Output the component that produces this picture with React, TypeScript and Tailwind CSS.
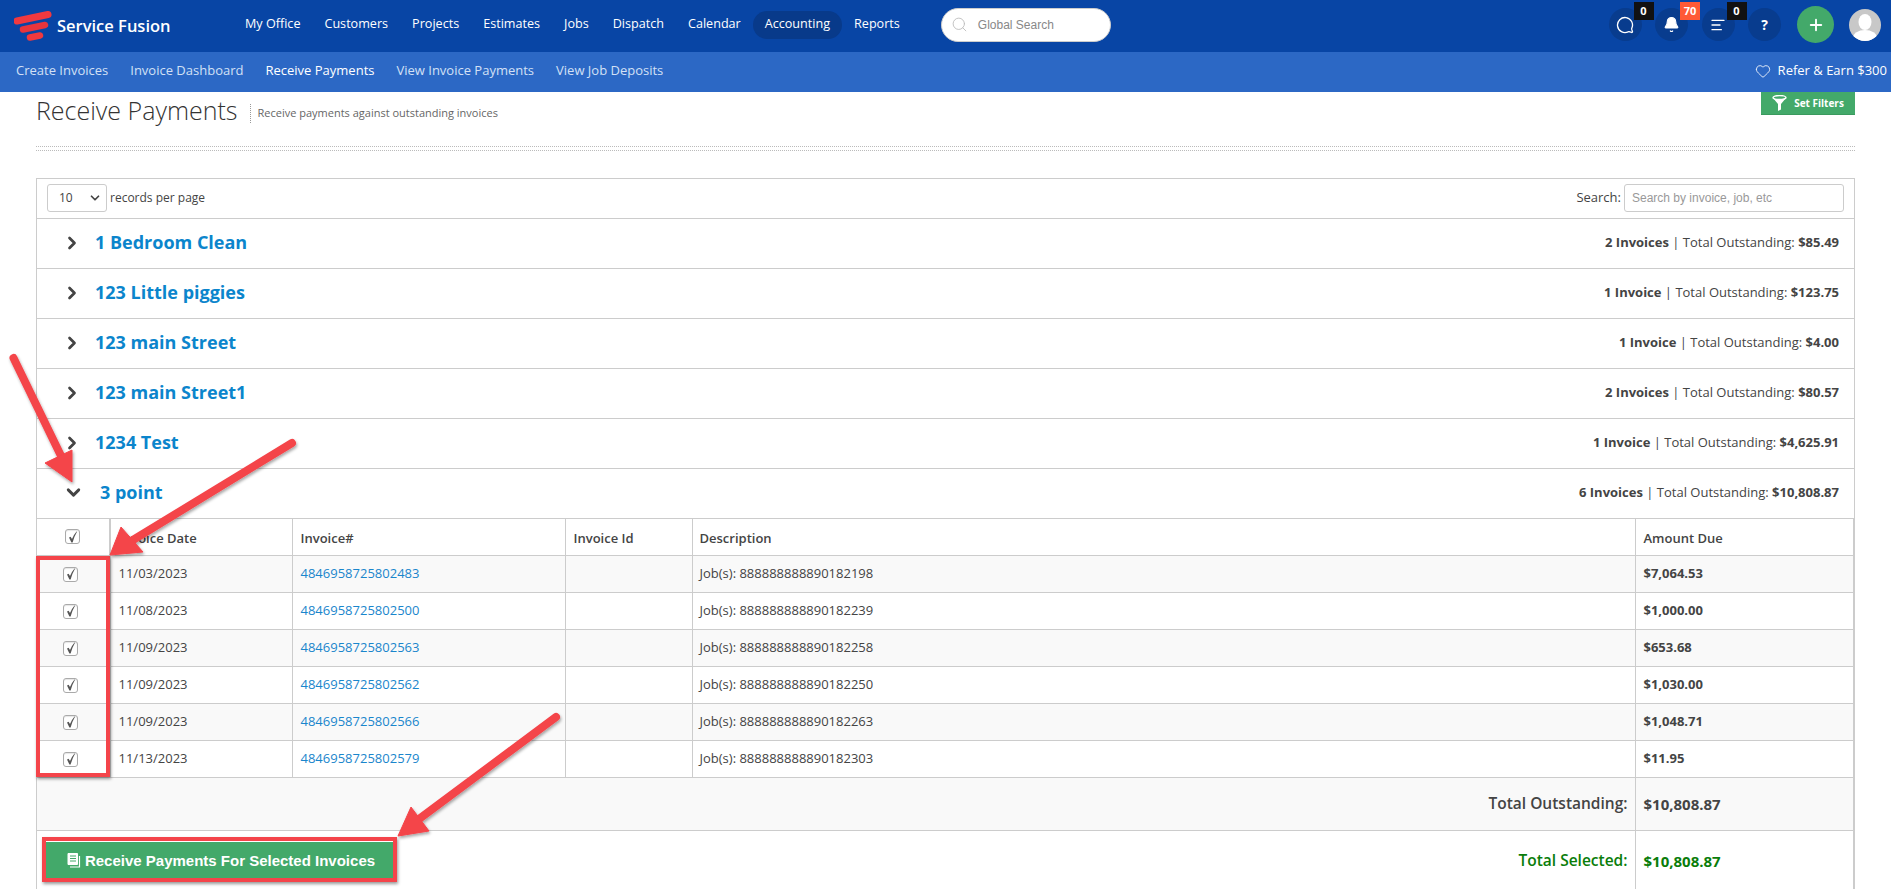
import { AlignLeft, Bell, ChevronDown, ChevronRight, Heart, MessageCircle, Plus, Search } from "lucide-react";

const mainNav = ["My Office", "Customers", "Projects", "Estimates", "Jobs", "Dispatch", "Calendar", "Accounting", "Reports"];
const subNav = ["Create Invoices", "Invoice Dashboard", "Receive Payments", "View Invoice Payments", "View Job Deposits"];

const customers = [
  { name: "1 Bedroom Clean", count: "2 Invoices", total: "$85.49" },
  { name: "123 Little piggies", count: "1 Invoice", total: "$123.75" },
  { name: "123 main Street", count: "1 Invoice", total: "$4.00" },
  { name: "123 main Street1", count: "2 Invoices", total: "$80.57" },
  { name: "1234 Test", count: "1 Invoice", total: "$4,625.91" },
];

const invoices = [
  { date: "11/03/2023", id: "4846958725802483", job: "Job(s): 888888888890182198", due: "$7,064.53" },
  { date: "11/08/2023", id: "4846958725802500", job: "Job(s): 888888888890182239", due: "$1,000.00" },
  { date: "11/09/2023", id: "4846958725802563", job: "Job(s): 888888888890182258", due: "$653.68" },
  { date: "11/09/2023", id: "4846958725802562", job: "Job(s): 888888888890182250", due: "$1,030.00" },
  { date: "11/09/2023", id: "4846958725802566", job: "Job(s): 888888888890182263", due: "$1,048.71" },
  { date: "11/13/2023", id: "4846958725802579", job: "Job(s): 888888888890182303", due: "$11.95" },
];

const Checkbox = () => (
  <span className="inline-flex h-[15px] w-[15px] items-center justify-center rounded-[3px] border border-[#aaa] bg-white shadow-[inset_0_1px_1px_rgba(0,0,0,0.1)]">
    <svg width="11" height="12" viewBox="0 0 11 12">
      <path d="M2 6.5 L3.6 5.8 L5 8 Q6.5 4 9.5 0.5 L10 0.8 Q7.5 5 5.6 11.5 L4.4 11.5 Z" fill="#555" />
    </svg>
  </span>
);

const IconCircle = ({ children, badge, hot }: { children: React.ReactNode; badge?: string; hot?: boolean }) => (
  <div className="relative flex h-[33px] w-[33px] items-center justify-center rounded-full bg-[#083c8e] text-white">
    {children}
    {badge && (
      <span
        className={`absolute left-[25px] top-[-6px] flex h-[18px] w-[20px] items-center justify-center text-[11px] font-bold ${
          hot ? "bg-[#ff5a36]" : "bg-[#111]"
        }`}
      >
        {badge}
      </span>
    )}
  </div>
);

export default function App() {
  return (
    <div className="relative h-[889px] w-[1891px] overflow-hidden bg-white font-['Open_Sans',sans-serif] text-[13px] text-[#444]">
      {/* Top bar */}
      <header className="flex h-[52px] items-center bg-[#0845a5] pb-[3px] text-white">
        <div className="mt-[3px] flex w-[233px] items-center pl-[14px]">
          <svg width="38" height="32" viewBox="0 0 38 32" className="shrink-0">
            <g stroke="#f0393f" strokeLinecap="round" fill="none">
              <path d="M3 11 L34 4.5" strokeWidth="7" />
              <path d="M9 19.5 L31 15" strokeWidth="6.5" stroke="#e8353c" />
              <path d="M16 27.5 L26 25.5" strokeWidth="6.5" />
            </g>
          </svg>
          <span className="ml-[5px] text-[16.5px] font-semibold">Service Fusion</span>
        </div>
        <nav className="flex items-center text-[12.6px]">
          {mainNav.map((item) => (
            <a
              key={item}
              className={`flex h-[28px] items-center rounded-full px-3 ${item === "Accounting" ? "bg-[#083a8a]" : ""}`}
            >
              {item}
            </a>
          ))}
        </nav>
        <div className="ml-[29px] flex h-[34px] w-[170px] items-center rounded-full border border-[#ccc] bg-white pl-[9px] font-['Liberation_Sans',sans-serif] text-[12px] text-[#888]">
          <Search className="h-[17px] w-[17px] text-[#bbb]" strokeWidth={1.25} />
          <span className="ml-[10px]">Global Search</span>
        </div>
        <div className="ml-auto flex items-center pr-[10px]">
          <div className="flex items-center gap-[13.5px]">
            <IconCircle badge="0">
              <MessageCircle className="h-[18px] w-[18px] -scale-x-100" strokeWidth={1.75} />
            </IconCircle>
            <IconCircle badge="70" hot>
              <Bell className="h-[17px] w-[17px]" fill="white" strokeWidth={1.5} />
            </IconCircle>
            <IconCircle badge="0">
              <AlignLeft className="h-[16px] w-[16px]" strokeWidth={2} />
            </IconCircle>
            <IconCircle>
              <span className="text-[14px] font-bold">?</span>
            </IconCircle>
          </div>
          <div className="ml-[16px] flex h-[37px] w-[37px] items-center justify-center rounded-full bg-[#43a96a]">
            <Plus className="h-[18px] w-[18px]" strokeWidth={2.5} />
          </div>
          <div className="ml-[15px] h-[32px] w-[32px] overflow-hidden rounded-full bg-[#c8c8c8]">
            <svg viewBox="0 0 32 32" className="h-full w-full">
              <ellipse cx="16" cy="13" rx="6.5" ry="8" fill="white" />
              <ellipse cx="16" cy="29" rx="12" ry="8" fill="white" />
            </svg>
          </div>
        </div>
      </header>

      {/* Sub nav */}
      <div className="flex h-[40px] items-center bg-[#2c68c5] pb-[2px] pl-[16px] pr-[4px] text-[#d3e0f5]">
        <nav className="flex items-center gap-[22px]">
          {subNav.map((item) => (
            <a key={item} className={item === "Receive Payments" ? "text-white" : ""}>
              {item}
            </a>
          ))}
        </nav>
        <div className="ml-auto flex items-center text-white">
          <Heart className="h-[16px] w-[16px]" strokeWidth={1.25} />
          <span className="ml-[7px]">Refer &amp; Earn $300</span>
        </div>
      </div>

      <main className="px-[36px]">
        {/* Page title */}
        <div className="flex h-[54px] items-start justify-between">
          <div className="mt-[2px] flex items-center">
            <h1 className="text-[25px] font-light leading-[32px] text-[#333]">Receive Payments</h1>
            <span className="ml-[12px] mt-[7px] border-l border-dotted border-[#999] py-[1px] pl-[7px] text-[11px] text-[#666]">
              Receive payments against outstanding invoices
            </span>
          </div>
          <button className="flex h-[23px] w-[94px] items-center justify-center gap-[7px] border-b border-[#3a9a5e] bg-[#43a96a] text-[10px] font-bold text-white">
            <svg width="15" height="16" viewBox="0 0 15 16">
              <ellipse cx="7.5" cy="2.5" rx="6.5" ry="2" fill="none" stroke="white" strokeWidth="1.4" />
              <path d="M1 3 L6 9 V16 L9 14.5 V9 L14 3 Q7.5 6.5 1 3 Z" fill="white" />
            </svg>
            Set Filters
          </button>
        </div>
        <div className="h-[5px] border-y border-dotted border-[#bbb]" />

        {/* Panel */}
        <section className="mt-[27px] border border-[#ccc]">
          <div className="flex h-[39px] items-center justify-between pb-[2px] pl-[10px] pr-[10px] text-[12px]">
            <div className="flex items-center">
              <div className="flex h-[28px] w-[60px] items-center justify-between rounded-[3px] border border-[#ccc] pl-[11px] pr-[4px]">
                10
                <ChevronDown className="h-[14px] w-[14px]" strokeWidth={3} />
              </div>
              <span className="ml-[3px]">records per page</span>
            </div>
            <div className="flex items-center">
              <span className="text-[13px]">Search:</span>
              <div className="ml-[3px] flex h-[28px] w-[220px] items-center rounded-[3px] border border-[#ccc] pl-[7px] font-['Liberation_Sans',sans-serif] text-[12px] text-[#999]">
                Search by invoice, job, etc
              </div>
            </div>
          </div>

          {customers.map((c) => (
            <div key={c.name} className="flex h-[50px] items-center justify-between border-t border-[#ccc] pb-[2px] pl-[25px] pr-[15px]">
              <div className="flex items-center">
                <ChevronRight className="h-[20px] w-[20px]" strokeWidth={3.25} />
                <span className="ml-[13px] text-[18px] font-bold text-[#0b85cc]">{c.name}</span>
              </div>
              <div>
                <b>{c.count}</b> | Total Outstanding: <b>{c.total}</b>
              </div>
            </div>
          ))}
          <div className="flex h-[50px] items-center justify-between border-t border-[#ccc] pb-[2px] pl-[26px] pr-[15px]">
            <div className="flex items-center">
              <ChevronDown className="h-[21px] w-[21px]" strokeWidth={3.25} />
              <span className="ml-[16px] text-[18px] font-bold text-[#0b85cc]">3 point</span>
            </div>
            <div>
              <b>6 Invoices</b> | Total Outstanding: <b>$10,808.87</b>
            </div>
          </div>

          <table className="w-full table-fixed border-collapse">
            <colgroup>
              <col className="w-[73px]" />
              <col className="w-[182px]" />
              <col className="w-[273px]" />
              <col className="w-[127px]" />
              <col className="w-[943px]" />
              <col />
            </colgroup>
            <thead>
              <tr className="h-[37px] border-t border-[#ccc] text-left font-semibold">
                <th className="border-r-2 border-[#ccc] pl-[28px] pt-[3px]">
                  <Checkbox />
                </th>
                <th className="border-r border-[#ccc] pl-[8px] pt-[3px] font-semibold">Invoice Date</th>
                <th className="border-r border-[#ccc] pl-[8px] pt-[3px] font-semibold">Invoice#</th>
                <th className="border-r border-[#ccc] pl-[8px] pt-[3px] font-semibold">Invoice Id</th>
                <th className="border-r border-[#ccc] pl-[7px] pt-[3px] font-semibold">Description</th>
                <th className="border-r border-[#ccc] pl-[8px] pt-[3px] font-semibold">Amount Due</th>
              </tr>
            </thead>
            <tbody>
              {invoices.map((row, i) => (
                <tr key={row.id} className={`h-[37px] border-t border-[#ccc] ${i % 2 === 0 ? "bg-[#f9f9f9]" : "bg-white"}`}>
                  <td className="border-r border-[#ccc] pl-[26px]">
                    <div className="flex">
                      <Checkbox />
                    </div>
                  </td>
                  <td className="border-r border-[#ccc] pl-[8px]">{row.date}</td>
                  <td className="border-r border-[#ccc] pl-[8px] text-[#1a86cc]">{row.id}</td>
                  <td className="border-r border-[#ccc]" />
                  <td className="border-r border-[#ccc] pl-[7px]">{row.job}</td>
                  <td className="border-r border-[#ccc] pl-[8px] font-bold">{row.due}</td>
                </tr>
              ))}
              <tr className="h-[53px] border-t border-[#ccc] bg-[#f9f9f9] text-[15.5px] font-semibold">
                <td colSpan={5} className="border-r border-[#ccc] pr-[7px] text-right">
                  Total Outstanding:
                </td>
                <td className="border-r border-[#ccc] pl-[8px] text-[15px] font-bold">$10,808.87</td>
              </tr>
              <tr className="h-[60px] border-t border-[#ccc] text-[15.5px] font-semibold text-[#0a7d0a]">
                <td colSpan={5} className="border-r border-[#ccc] pl-[9px] pr-[7px] text-right">
                  <div className="flex items-center justify-between">
                    <button className="flex h-[37px] w-[347px] items-center justify-center gap-[4px] bg-[#43a96a] pl-[3px] font-['Liberation_Sans',sans-serif] text-[15px] font-bold text-white">
                      <svg width="14" height="15" viewBox="0 0 14 15" fill="none" stroke="white">
                        <path d="M1 .5H10.5V11.5H1Z" fill="white" />
                        <path d="M3 3H9M3 5.5H9M3 8H9" stroke="#43a96a" />
                        <path d="M12.5 3V14H3" strokeWidth="1.2" />
                      </svg>
                      Receive Payments For Selected Invoices
                    </button>
                    <span>Total Selected:</span>
                  </div>
                </td>
                <td className="border-r border-[#ccc] pl-[8px] text-[15px] font-bold">$10,808.87</td>
              </tr>
            </tbody>
          </table>
        </section>
      </main>

      {/* Red annotations laid over the page */}
      <div className="pointer-events-none absolute left-[36px] top-[556px] h-[221px] w-[74px] border-[4px] border-[#f4444a] shadow-[1px_2px_3px_rgba(0,0,0,0.4)]" />
      <div className="pointer-events-none absolute left-[42px] top-[837px] h-[45px] w-[355px] border-[4px] border-[#f4444a] shadow-[1px_2px_3px_rgba(0,0,0,0.4)]" />
      <svg className="pointer-events-none absolute left-0 top-0" width="1891" height="889" viewBox="0 0 1891 889">
        <defs>
          <filter id="arrowShadow" x="-20%" y="-20%" width="140%" height="140%">
            <feDropShadow dx="1" dy="2" stdDeviation="1.5" floodColor="#000" floodOpacity="0.35" />
          </filter>
        </defs>
        <g fill="#f4444a" stroke="#f4444a" filter="url(#arrowShadow)">
          <path d="M13.5 358 L63 460" strokeWidth="8" strokeLinecap="round" fill="none" />
          <path d="M45 463 L72 450 L72 482 Z" strokeWidth="1" />
          <path d="M292 443 L128 543" strokeWidth="8" strokeLinecap="round" fill="none" />
          <path d="M110 555 L121 527 L143 552 Z" strokeWidth="1" />
          <path d="M556 717 L415 822" strokeWidth="8" strokeLinecap="round" fill="none" />
          <path d="M398 836 L411 807 L429 831 Z" strokeWidth="1" />
        </g>
      </svg>
    </div>
  );
}
